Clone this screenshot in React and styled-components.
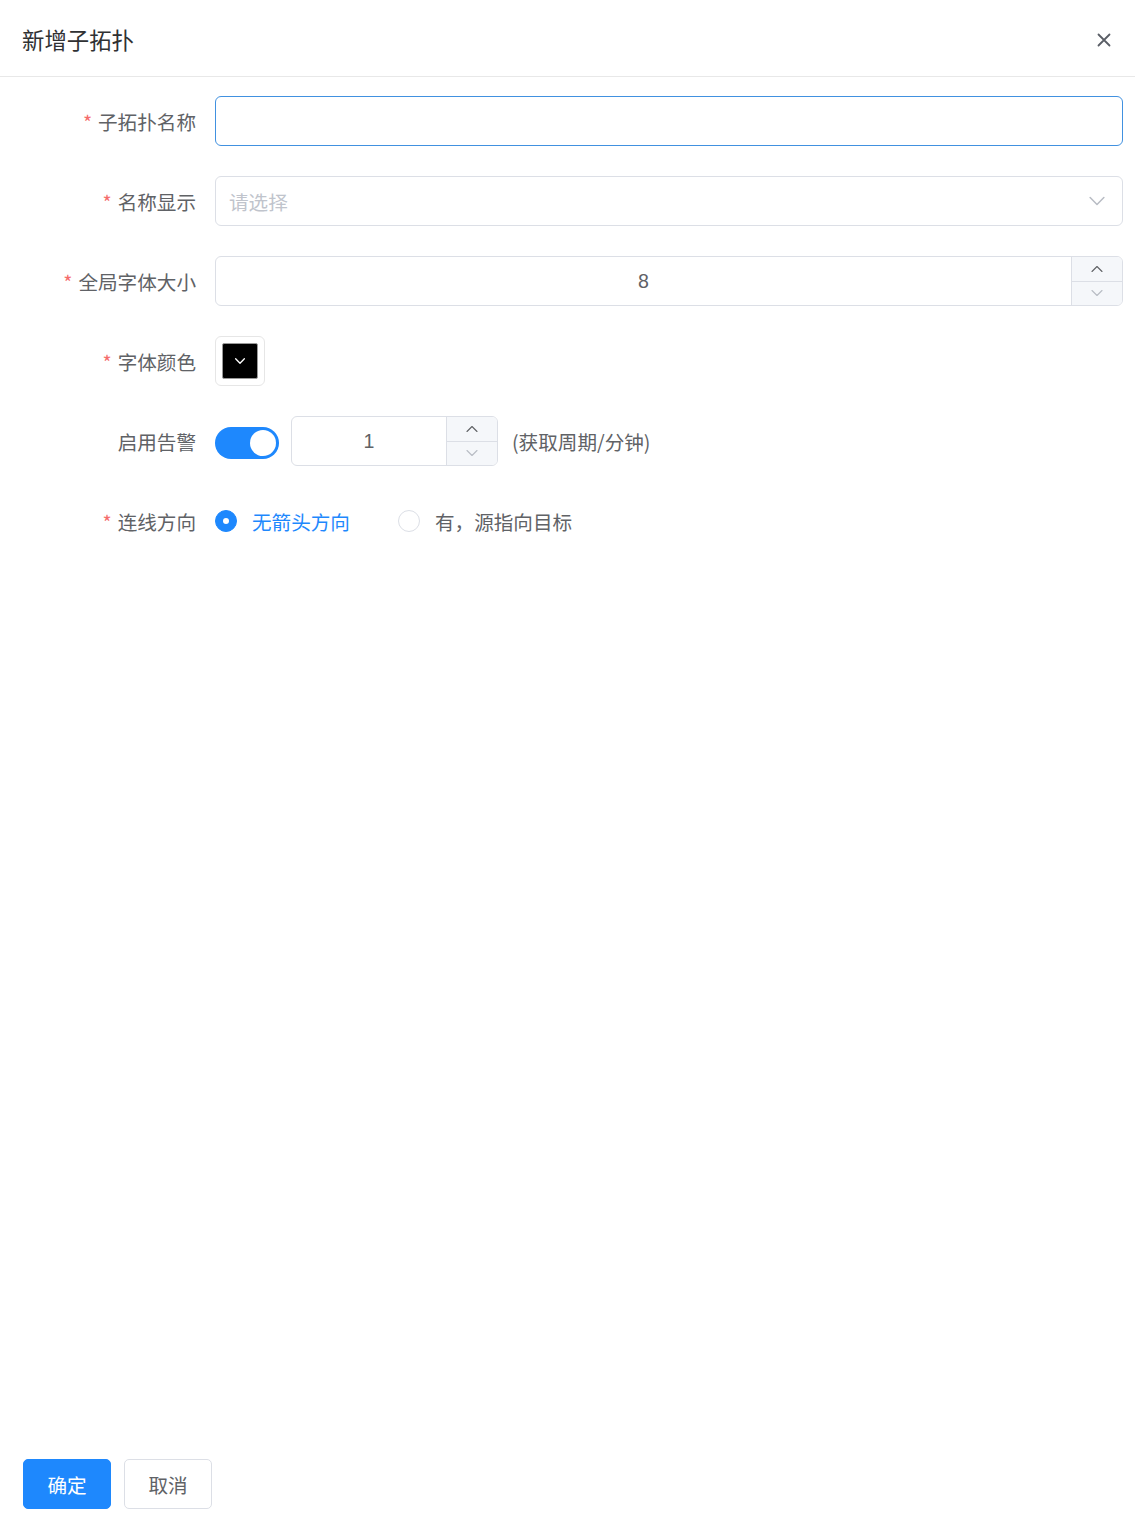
import React from "react";
import styled, { createGlobalStyle } from "styled-components";

const GlobalStyle = createGlobalStyle`
  html, body {
    margin: 0;
    padding: 0;
    background: #ffffff;
  }
  body {
    font-family: "Noto Sans CJK SC", "Noto Sans", sans-serif;
  }
  * {
    box-sizing: border-box;
  }
`;

const BLUE = "#1e88fd";

function Chevron({ dir = "down", size = 14, color = "#606266", stroke = 1.4 }) {
  const d = dir === "down" ? "M3 5.5 L8 10.5 L13 5.5" : "M3 10.5 L8 5.5 L13 10.5";
  return (
    <svg width={size} height={size} viewBox="0 0 16 16" fill="none">
      <path d={d} stroke={color} strokeWidth={stroke} strokeLinecap="round" strokeLinejoin="round" />
    </svg>
  );
}

function NumberBox({ value, width }) {
  return (
    <NumberWrap $width={width}>
      <NumberValue>{value}</NumberValue>
      <Spinner>
        <SpinButton>
          <Chevron dir="up" size={16} color="#606266" stroke={1.1} />
        </SpinButton>
        <SpinButton $bottom>
          <Chevron dir="down" size={16} color="#b8bcc4" stroke={1.1} />
        </SpinButton>
      </Spinner>
    </NumberWrap>
  );
}

export default function App() {
  return (
    <Drawer>
      <GlobalStyle />
      <Header>
        <Title>新增子拓扑</Title>
        <CloseButton>
          <svg width="16" height="16" viewBox="0 0 16 16">
            <path d="M2.5 2.5 L13.5 13.5 M13.5 2.5 L2.5 13.5" stroke="#5a5e66" strokeWidth="1.8" strokeLinecap="round" />
          </svg>
        </CloseButton>
      </Header>

      <Form>
        <Row>
          <Label $required>子拓扑名称</Label>
          <TextInput $focused />
        </Row>

        <Row>
          <Label $required>名称显示</Label>
          <Select>
            <Placeholder>请选择</Placeholder>
            <Chevron dir="down" size={22} color="#b8bcc4" stroke={1.1} />
          </Select>
        </Row>

        <Row>
          <Label $required>全局字体大小</Label>
          <NumberBox value="8" />
        </Row>

        <Row>
          <Label $required>字体颜色</Label>
          <ColorPicker>
            <ColorSwatch $color="#000000">
              <Chevron dir="down" size={14} color="#ffffff" stroke={1.5} />
            </ColorSwatch>
          </ColorPicker>
        </Row>

        <Row>
          <Label>启用告警</Label>
          <Inline>
            <Switch $on>
              <Thumb />
            </Switch>
            <NumberBox value="1" width="207px" />
            <Hint>(获取周期/分钟)</Hint>
          </Inline>
        </Row>

        <Row>
          <Label $required>连线方向</Label>
          <RadioGroup>
            <Radio>
              <RadioDot $checked />
              <RadioText $checked>无箭头方向</RadioText>
            </Radio>
            <Radio>
              <RadioDot />
              <RadioText>有，源指向目标</RadioText>
            </Radio>
          </RadioGroup>
        </Row>
      </Form>

      <Footer>
        <Button $primary>确定</Button>
        <Button>取消</Button>
      </Footer>
    </Drawer>
  );
}

const Drawer = styled.div`
  width: 1135px;
  height: 1525px;
  display: flex;
  flex-direction: column;
  background: #ffffff;
  overflow: hidden;
`;

const Header = styled.div`
  height: 77px;
  padding: 0 22px;
  display: flex;
  align-items: center;
  justify-content: space-between;
  border-bottom: 1px solid #e8e8e8;
`;

const Title = styled.div`
  font-size: 22.4px;
  color: #303133;
  line-height: 1;
  margin-top: 3px;
`;

const CloseButton = styled.div`
  width: 20px;
  height: 20px;
  display: flex;
  align-items: center;
  justify-content: center;
  margin-right: -1px;
  margin-top: 4px;
  cursor: pointer;
`;

const Form = styled.div`
  flex: 1;
  padding: 19px 12px 0 0;
  display: flex;
  flex-direction: column;
  gap: 30px;
`;

const Row = styled.div`
  display: grid;
  grid-template-columns: 215px 1fr;
  align-items: center;
  height: 50px;
`;

const Label = styled.label`
  justify-self: end;
  padding-right: 19px;
  margin-top: 2px;
  font-size: 19.6px;
  color: #606266;
  line-height: 1;
  &::before {
    content: ${(p) => (p.$required ? '"*"' : "none")};
    color: #f56c6c;
    margin-right: 6px;
    font-size: 19.6px;
  }
`;

const TextInput = styled.input`
  height: 50px;
  width: 100%;
  border: 1px solid ${(p) => (p.$focused ? "#4191e0" : "#dcdfe6")};
  border-radius: 6px;
  outline: none;
  padding: 0 20px;
  font-size: 19.6px;
  font-family: inherit;
`;

const Select = styled.div`
  height: 50px;
  border: 1px solid #dcdfe6;
  border-radius: 6px;
  padding: 0 14px 0 13px;
  display: flex;
  align-items: center;
  justify-content: space-between;
`;

const Placeholder = styled.span`
  font-size: 19.6px;
  color: #c0c4cc;
`;

const NumberWrap = styled.div`
  height: 50px;
  width: ${(p) => p.$width || "100%"};
  border: 1px solid #dcdfe6;
  border-radius: 6px;
  display: flex;
  overflow: hidden;
`;

const NumberValue = styled.div`
  flex: 1;
  display: flex;
  align-items: center;
  justify-content: center;
  font-family: "Liberation Sans", "Noto Sans CJK SC", sans-serif;
  font-size: 19.6px;
  color: #606266;
`;

const Spinner = styled.div`
  width: 51px;
  display: flex;
  flex-direction: column;
  border-left: 1px solid #dcdfe6;
  background: #f5f7fa;
`;

const SpinButton = styled.div`
  flex: 1;
  display: flex;
  align-items: center;
  justify-content: center;
  border-top: ${(p) => (p.$bottom ? "1px solid #dcdfe6" : "none")};
`;

const ColorPicker = styled.div`
  width: 50px;
  height: 50px;
  border: 1px solid #e6e6e6;
  border-radius: 6px;
  padding: 6px;
`;

const ColorSwatch = styled.div`
  width: 100%;
  height: 100%;
  background: ${(p) => p.$color};
  border: 1px solid #999999;
  border-radius: 2px;
  display: flex;
  align-items: center;
  justify-content: center;
`;

const Inline = styled.div`
  display: flex;
  align-items: center;
  gap: 12px;
`;

const Switch = styled.div`
  width: 64px;
  height: 32px;
  margin-top: 4px;
  border-radius: 16px;
  background: ${(p) => (p.$on ? BLUE : "#dcdfe6")};
  display: flex;
  align-items: center;
  justify-content: ${(p) => (p.$on ? "flex-end" : "flex-start")};
  padding: 0 3px;
`;

const Thumb = styled.div`
  width: 26px;
  height: 26px;
  border-radius: 50%;
  background: #ffffff;
`;

const Hint = styled.span`
  font-size: 19.6px;
  color: #606266;
  margin-left: 2px;
`;

const RadioGroup = styled.div`
  display: flex;
  align-items: center;
  gap: 48px;
`;

const Radio = styled.div`
  display: flex;
  align-items: center;
  gap: 15px;
`;

const RadioDot = styled.span`
  width: 22px;
  height: 22px;
  border-radius: 50%;
  border: 1px solid ${(p) => (p.$checked ? BLUE : "#dcdfe6")};
  background: ${(p) => (p.$checked ? BLUE : "#ffffff")};
  display: flex;
  align-items: center;
  justify-content: center;
  &::after {
    content: "";
    width: 6px;
    height: 6px;
    border-radius: 50%;
    background: #ffffff;
  }
`;

const RadioText = styled.span`
  font-size: 19.6px;
  color: ${(p) => (p.$checked ? BLUE : "#606266")};
`;

const Footer = styled.div`
  display: flex;
  gap: 13px;
  padding: 0 23px 16px;
`;

const Button = styled.button`
  width: 88px;
  height: 50px;
  border-radius: 5px;
  font-family: inherit;
  font-size: 19.6px;
  border: 1px solid ${(p) => (p.$primary ? BLUE : "#dcdfe6")};
  background: ${(p) => (p.$primary ? BLUE : "#ffffff")};
  color: ${(p) => (p.$primary ? "#ffffff" : "#606266")};
  cursor: pointer;
`;
